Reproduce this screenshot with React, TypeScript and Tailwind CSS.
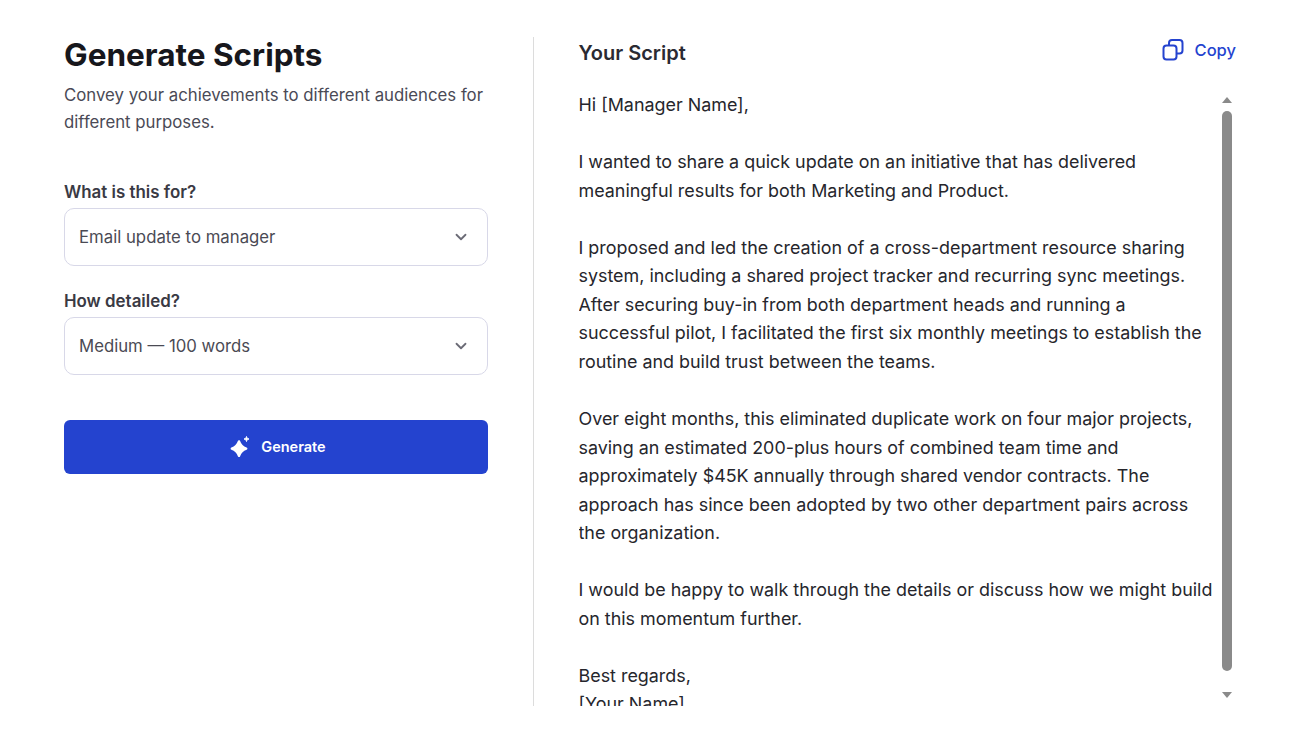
import { ChevronDown } from "lucide-react"

const Field = ({ label, value }: { label: string; value: string }) => (
  <div>
    <div className="text-[16.9px] leading-[24px] font-semibold text-[#3a3a44]">{label}</div>
    <div className="mt-[4px] flex h-[58px] items-center justify-between rounded-[10px] border border-[#d8d8e8] bg-white pl-[14px] pr-[17px]">
      <span className="pt-[1px] text-[16.75px] text-[#4a4a54]">{value}</span>
      <ChevronDown className="h-[18px] w-[18px] text-[#6b6b76]" strokeWidth={2.4} />
    </div>
  </div>
)

const Scrollbar = () => (
  <div className="mr-[4px] flex h-full w-[10px] flex-col items-center pt-[6px]">
    <div className="h-0 w-0 border-x-[5px] border-b-[6px] border-x-transparent border-b-[#8a8a8a]" />
    <div className="mt-[8px] h-[560px] w-[10px] rounded-full bg-[#8a8a8a]" />
    <div className="mt-[21px] h-0 w-0 border-x-[5px] border-t-[6px] border-x-transparent border-t-[#8a8a8a]" />
  </div>
)

const App = () => {
  return (
    <div className="h-[740px] w-[1300px] bg-white pl-[64px] pt-[37px] font-['Inter',sans-serif]">
      <div className="flex h-[669px]">
        <div className="w-[424px] shrink-0">
          <h1 className="text-[31.5px] leading-[36px] font-bold text-[#17171c]">Generate Scripts</h1>
          <p className="mt-[9px] text-[16.78px] leading-[27px] text-[#4a4a56]">
            Convey your achievements to different audiences for different purposes.
          </p>
          <div className="mt-[44px] flex flex-col gap-[23px]">
            <Field label="What is this for?" value="Email update to manager" />
            <Field label="How detailed?" value="Medium — 100 words" />
          </div>
          <button className="mt-[45px] flex h-[54px] w-full items-center justify-center gap-[11px] rounded-[6px] bg-[#2443cf] text-[14.5px] font-semibold text-white">
            <svg viewBox="-2 0 24 24" className="h-[24px] w-[24px]" fill="currentColor" stroke="currentColor" strokeLinejoin="round">
              <path strokeWidth="2.4" d="M11 6.4C12.2 10 14.600 12.400 18.200 13.600 14.600 14.800 12.200 17.200 11 20.800 9.800 17.200 7.400 14.800 3.800 13.600 7.400 12.400 9.800 10 11 6.400z" />
              <path strokeWidth="1" d="M18.500 1.500c.4 1.600.9 2.100 2.500 2.500-1.600.4-2.100.9-2.500 2.500-.4-1.600-.9-2.100-2.500-2.500 1.600-.4 2.100-.9 2.500-2.500z" />
            </svg>
            Generate
          </button>
        </div>

        <div className="ml-[45px] w-px bg-[#dcdcdc]" />

        <div className="ml-[44.5px] flex w-[657.5px] flex-col">
          <div className="flex items-start justify-between">
            <h2 className="mt-[2px] text-[20px] leading-[28px] font-semibold text-[#2a2a32]">Your Script</h2>
            <button className="flex items-center gap-[11px] text-[16.5px] font-[450] leading-[26px] text-[#2443cf]">
              <svg viewBox="0 0 22 22" className="h-[22px] w-[22px]" fill="none" stroke="currentColor" strokeWidth="2">
                <rect x="1.5" y="6.5" width="13" height="14" rx="3" />
                <path d="M7 6.500V4a3 3 0 0 1 3-3h7.500a3 3 0 0 1 3 3v7.500a3 3 0 0 1-3 3h-3" />
              </svg>
              Copy
            </button>
          </div>
          <div className="mt-[24px] flex min-h-0 flex-1 justify-between">
            <div className="w-[640px] overflow-hidden text-[17.9px] leading-[28.55px] text-[#26262c]">
              <p>Hi [Manager Name],</p>
              <p className="mt-[28.55px]">
                I wanted to share a quick update on an initiative that has delivered<br />
                meaningful results for both Marketing and Product.
              </p>
              <p className="mt-[28.55px]">
                I proposed and led the creation of a cross-department resource sharing<br />
                system, including a shared project tracker and recurring sync meetings.<br />
                After securing buy-in from both department heads and running a<br />
                successful pilot, I facilitated the first six monthly meetings to establish the<br />
                routine and build trust between the teams.
              </p>
              <p className="mt-[28.55px]">
                Over eight months, this eliminated duplicate work on four major projects,<br />
                saving an estimated 200-plus hours of combined team time and<br />
                approximately $45K annually through shared vendor contracts. The<br />
                approach has since been adopted by two other department pairs across<br />
                the organization.
              </p>
              <p className="mt-[28.55px]">
                I would be happy to walk through the details or discuss how we might build<br />
                on this momentum further.
              </p>
              <p className="mt-[28.55px]">
                Best regards,<br />
                [Your Name]
              </p>
            </div>
            <Scrollbar />
          </div>
        </div>
      </div>
    </div>
  )
}

export default App
